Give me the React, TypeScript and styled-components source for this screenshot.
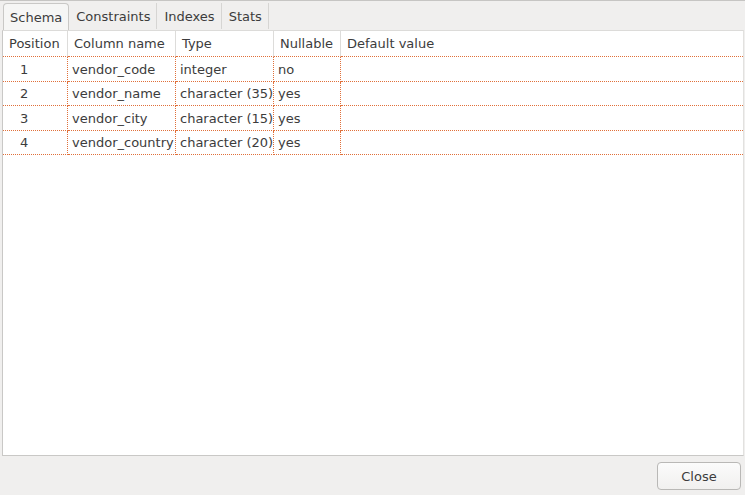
import React from "react";
import styled, { createGlobalStyle } from "styled-components";

const Global = createGlobalStyle`
  html, body { margin: 0; padding: 0; }
  body {
    font-family: "DejaVu Sans", "Liberation Sans", sans-serif;
    font-size: 13px;
    color: #3c3c3c;
    background: #f0efee;
  }
`;

const Window = styled.div`
  width: 745px;
  height: 495px;
  box-sizing: border-box;
  border-top: 1px solid #c6c5c3;
  background: #f0efee;
  display: flex;
  flex-direction: column;
`;

const Notebook = styled.div`
  flex: 1;
  display: flex;
  flex-direction: column;
  padding: 0 1px 0 2px;
`;

const TabBar = styled.div`
  height: 29px;
  display: flex;
  align-items: flex-end;
  padding-left: 1px;
`;

const Tab = styled.div<{ $active?: boolean }>`
  height: ${(p) => (p.$active ? "27px" : "26px")};
  box-sizing: border-box;
  display: flex;
  align-items: center;
  padding: ${(p) => (p.$active ? "0 6px" : "0 6px 0 7px")};
  color: #3c3c3c;
  background: ${(p) => (p.$active ? "#f6f6f5" : "transparent")};
  border: ${(p) => (p.$active ? "1px solid #c9c8c6" : "none")};
  border-bottom: none;
  border-radius: ${(p) => (p.$active ? "4px 4px 0 0" : "0")};
  border-right: ${(p) => (p.$active ? "1px solid #c9c8c6" : "1px solid #d6d5d3")};
  margin-bottom: ${(p) => (p.$active ? "0" : "1px")};
`;

const Panel = styled.div`
  flex: 1;
  background: #ffffff;
  border: 1px solid #c9c8c6;
  border-top: 1px solid #dcdbd9;
  border-right-color: #e2e1df;
`;

const Grid = styled.div`
  display: grid;
  grid-template-columns: 65px 108px 98px 67px 1fr;
`;

const HeadCell = styled.div<{ $last?: boolean }>`
  height: 26px;
  display: flex;
  align-items: center;
  padding-left: 6px;
  box-sizing: border-box;
  border-right: ${(p) => (p.$last ? "none" : "1px solid #dddcda")};
  border-bottom: 1px dotted #e0703a;
  color: #3c3c3c;
`;

const Cell = styled.div<{ $center?: boolean; $last?: boolean }>`
  height: 24.5px;
  display: flex;
  align-items: center;
  box-sizing: border-box;
  padding-left: ${(p) => (p.$center ? "17px" : "4px")};
  padding-top: 1px;
  border-right: ${(p) => (p.$last ? "none" : "1px dotted #e0703a")};
  border-bottom: 1px dotted #e0703a;
  white-space: nowrap;
  color: #3c3c3c;
`;

const Footer = styled.div`
  height: 39px;
  display: flex;
  justify-content: flex-end;
  align-items: center;
  padding-right: 4px;
  padding-top: 1px;
  box-sizing: border-box;
`;

const Button = styled.button`
  width: 84px;
  height: 28px;
  font-family: "DejaVu Sans", "Liberation Sans", sans-serif;
  font-size: 13px;
  color: #3c3c3c;
  background: linear-gradient(#fbfbfb, #f1f0ef);
  border: 1px solid #b9b8b6;
  border-radius: 4px;
  padding: 0;
`;

const headers = ["Position", "Column name", "Type", "Nullable", "Default value"];
const rows = [
  ["1", "vendor_code", "integer", "no", ""],
  ["2", "vendor_name", "character (35)", "yes", ""],
  ["3", "vendor_city", "character (15)", "yes", ""],
  ["4", "vendor_country", "character (20)", "yes", ""],
];

export default function App() {
  return (
    <>
      <Global />
      <Window>
        <Notebook>
          <TabBar>
            <Tab $active>Schema</Tab>
            <Tab>Constraints</Tab>
            <Tab>Indexes</Tab>
            <Tab>Stats</Tab>
          </TabBar>
          <Panel>
            <Grid>
              {headers.map((h, i) => (
                <HeadCell key={h} $last={i === headers.length - 1}>
                  {h}
                </HeadCell>
              ))}
              {rows.map((r) =>
                r.map((c, i) => (
                  <Cell key={r[0] + i} $center={i === 0} $last={i === r.length - 1}>
                    {c}
                  </Cell>
                ))
              )}
            </Grid>
          </Panel>
        </Notebook>
        <Footer>
          <Button>Close</Button>
        </Footer>
      </Window>
    </>
  );
}
